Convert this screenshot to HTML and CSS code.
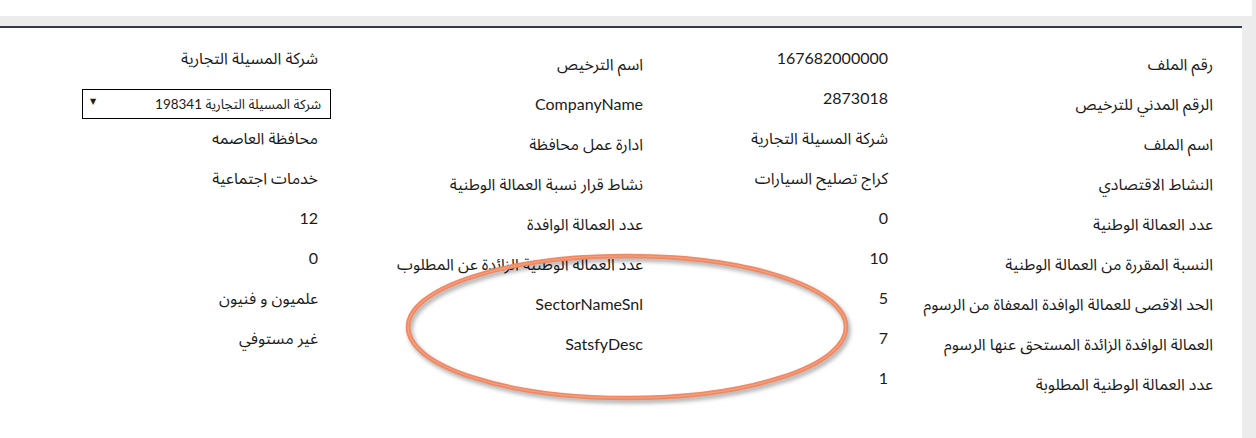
FILE: index.html
```html
<!DOCTYPE html>
<html lang="ar">
<head>
    <meta charset="UTF-8">
    <meta name="viewport" content="width=device-width, initial-scale=1.0">
    <title>بيانات الملف</title>
    <link rel="stylesheet" href="styles.css">
</head>
<body>
    <div class="topbar"></div>
    <div class="panel">
        <div class="details" dir="rtl">
            <div class="label">رقم الملف</div>
            <div class="value">167682000000</div>
            <div class="label">اسم الترخيص</div>
            <div class="value">شركة المسيلة التجارية</div>

            <div class="label">الرقم المدني للترخيص</div>
            <div class="value">2873018</div>
            <div class="label">CompanyName</div>
            <div class="value">
                <div class="select">
                    <span>شركة المسيلة التجارية 198341</span>
                    <span class="arrow">▼</span>
                </div>
            </div>

            <div class="label">اسم الملف</div>
            <div class="value">شركة المسيلة التجارية</div>
            <div class="label">ادارة عمل محافظة</div>
            <div class="value">محافظة العاصمه</div>

            <div class="label">النشاط الاقتصادي</div>
            <div class="value">كراج تصليح السيارات</div>
            <div class="label">نشاط قرار نسبة العمالة الوطنية</div>
            <div class="value">خدمات اجتماعية</div>

            <div class="label">عدد العمالة الوطنية</div>
            <div class="value">0</div>
            <div class="label">عدد العمالة الوافدة</div>
            <div class="value">12</div>

            <div class="label">النسبة المقررة من العمالة الوطنية</div>
            <div class="value">10</div>
            <div class="label">عدد العمالة الوطنية الزائدة عن المطلوب</div>
            <div class="value">0</div>

            <div class="label">الحد الاقصى للعمالة الوافدة المعفاة من الرسوم</div>
            <div class="value">5</div>
            <div class="label">SectorNameSnl</div>
            <div class="value">علميون و فنيون</div>

            <div class="label">العمالة الوافدة الزائدة المستحق عنها الرسوم</div>
            <div class="value">7</div>
            <div class="label">SatsfyDesc</div>
            <div class="value">غير مستوفي</div>

            <div class="label">عدد العمالة الوطنية المطلوبة</div>
            <div class="value">1</div>
            <div class="label"></div>
            <div class="value"></div>
        </div>

        <svg class="mark" xmlns="http://www.w3.org/2000/svg" width="460" height="164" viewBox="0 0 460 164">
            <ellipse cx="221" cy="74" rx="219" ry="71" fill="none" stroke="#f08862" stroke-width="4.5"></ellipse>
            <ellipse cx="221" cy="74" rx="219" ry="71" fill="none" stroke="#f6a080" stroke-width="1.2"></ellipse>
        </svg>
    </div>
</body>
</html>
```

FILE: styles.css
```css
body, html {
    margin: 0;
    padding: 0;
    background: #ececec;
    height: 100%;
    overflow: hidden;
}
body {
    font-family: Lato, 'Noto Sans Arabic', 'DejaVu Sans', sans-serif;
    font-size: 16px;
    color: #1b1b1b;
}
.topbar {
    width: 1252px;
    height: 16px;
    background: #fff;
}
.panel {
    position: relative;
    width: 1242px;
    margin-top: 10px;
    height: 420px;
    background: #fff;
    border-top: 2px solid #343c4a;
}
.details {
    display: grid;
    grid-template-columns: 325px 245px 325px 245px;
    grid-auto-rows: 40px;
    padding: 20px 29px 0 0;
    line-height: 20px;
}
.label {
    padding-top: 6px;
    white-space: nowrap;
}
.value {
    white-space: nowrap;
}
.select {
    display: flex;
    justify-content: space-between;
    align-items: center;
    margin-right: -13px;
    margin-top: 1px;
    padding: 0 9px 0 7px;
    box-sizing: border-box;
    width: 249px;
    height: 30px;
    border: 1px solid #000;
    font-size: 13.5px;
}
.select .arrow {
    font-size: 8px;
    margin-top: -6px;
}
.mark {
    position: absolute;
    left: 406px;
    top: 225px;
    overflow: visible;
    filter: drop-shadow(2px 3px 2px rgba(0, 0, 0, 0.35));
}
```
